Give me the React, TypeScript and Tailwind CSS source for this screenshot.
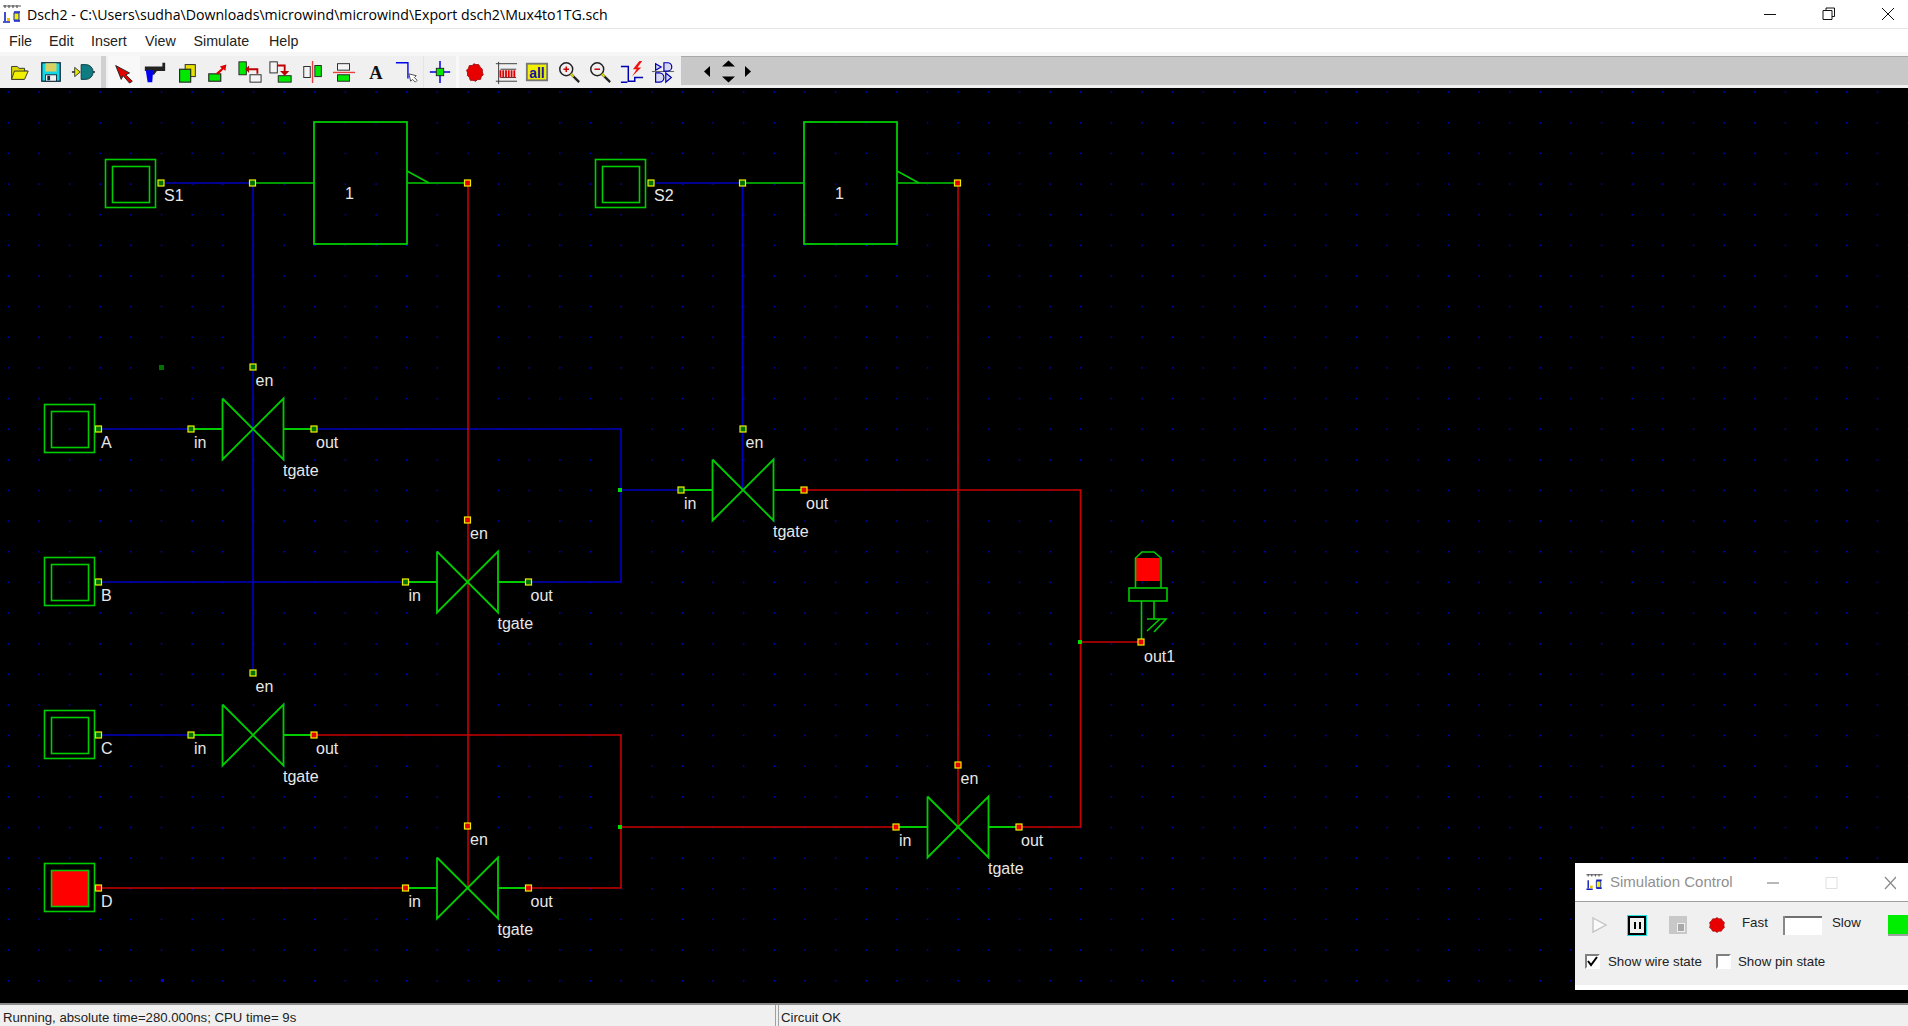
import type { ReactNode } from "react";

const GREEN = "#00cc00";
const BLUE = "#0000c0";
const RED = "#c80000";

const menus = [
  { label: "File", slot: "w-[40px]" },
  { label: "Edit", slot: "w-[42px]" },
  { label: "Insert", slot: "w-[54px]" },
  { label: "View", slot: "w-[48.5px]" },
  { label: "Simulate", slot: "w-[75.5px]" },
  { label: "Help", slot: "w-[40px]" },
];

function Ic({ children }: { children: ReactNode }) {
  return (
    <svg width="24" height="24" viewBox="0 0 26 26" fill="none">
      {children}
    </svg>
  );
}

const icons: Record<string, ReactNode> = {
  open: (
    <Ic>
      <path d="M5 7h6l2 2h6v3h3l-4 9H5z" fill="#d8d800" stroke="#333" strokeWidth="1" />
      <path d="M8 12h15l-4 9H5z" fill="#f0f000" stroke="#333" strokeWidth="1" />
    </Ic>
  ),
  save: (
    <Ic>
      <rect x="3" y="3" width="20" height="20" fill="#10d8e8" stroke="#10283a" strokeWidth="1.4" />
      <rect x="7" y="3.5" width="12" height="9" fill="#d8d060" />
      <rect x="7" y="16" width="12" height="7" fill="#f0f0f0" stroke="#10283a" />
      <rect x="9" y="17" width="3" height="5" fill="#10283a" />
    </Ic>
  ),
  sim: (
    <Ic>
      <path d="M4 8l6 5-6 5z" fill="#e8e800" stroke="#333" />
      <path d="M11 5h5a8 8 0 0 1 0 16h-5z" fill="#0e7c80" stroke="#0a3c40" />
      <path d="M24 13h2M1 13h3" stroke="#222" strokeWidth="1.4" />
    </Ic>
  ),
  arrow: (
    <Ic>
      <path d="M22 23l-7-7 4-2L4 6l6 15 2-4 7 8z" fill="#e00000" stroke="#222" strokeWidth="1" />
    </Ic>
  ),
  gun: (
    <Ic>
      <path d="M2 7h19V3h3v9H15l-3 4H9v-4H2z" fill="#222" />
      <path d="M3 11h8l-1 13H5z" fill="#0000f0" />
    </Ic>
  ),
  copy: (
    <Ic>
      <rect x="11" y="5" width="11" height="13" fill="#e8e000" stroke="#222" />
      <rect x="5" y="10" width="12" height="14" fill="#00e800" stroke="#222" strokeWidth="1.2" />
    </Ic>
  ),
  move: (
    <Ic>
      <rect x="3" y="15" width="13" height="8" fill="#00e800" stroke="#222" strokeWidth="1.2" />
      <path d="M11 14l6-5-2-2 7-2-1 7-2-2-6 6z" fill="#e00000" />
    </Ic>
  ),
  swapA: (
    <Ic>
      <rect x="1" y="2" width="8" height="14" fill="#00e800" stroke="#222" />
      <rect x="13" y="16" width="12" height="8" fill="#f4f4f4" stroke="#222" />
      <path d="M21 15v-5H12" stroke="#c00000" strokeWidth="2" />
      <path d="M12 6l-4 4 4 4z" fill="#c00000" />
    </Ic>
  ),
  swapB: (
    <Ic>
      <rect x="1" y="2" width="8" height="12" fill="#f4f4f4" stroke="#222" />
      <rect x="10" y="17" width="14" height="7" fill="#00e800" stroke="#222" />
      <path d="M9 6h8v7" stroke="#c00000" strokeWidth="2" />
      <path d="M12 12h10l-5 5z" fill="#c00000" />
    </Ic>
  ),
  alignV: (
    <Ic>
      <rect x="3" y="7" width="7" height="12" fill="#f4f4f4" stroke="#222" />
      <rect x="15" y="6" width="7" height="12" fill="#00e800" stroke="#222" />
      <path d="M12.5 1v24" stroke="#e84040" strokeWidth="1.5" />
    </Ic>
  ),
  alignH: (
    <Ic>
      <rect x="6" y="4" width="13" height="7" fill="#f4f4f4" stroke="#222" />
      <rect x="6" y="16" width="13" height="7" fill="#00e800" stroke="#222" />
      <path d="M1 13.5h24" stroke="#e84040" strokeWidth="1.5" />
    </Ic>
  ),
  text: (
    <Ic>
      <text x="13" y="21" textAnchor="middle" fontSize="20" fontWeight="700" fill="#111" fontFamily="Liberation Serif, serif">
        A
      </text>
    </Ic>
  ),
  wire: (
    <Ic>
      <path d="M1 3h13v17" stroke="#0000f0" strokeWidth="1.5" />
      <path d="M15 15l2 8 2-2 3 3 2-2-3-3 2-2z" fill="#fff" stroke="#444" />
    </Ic>
  ),
  pin: (
    <Ic>
      <path d="M13 1v24M2 13h22" stroke="#0000e0" strokeWidth="1.6" />
      <rect x="9" y="9" width="8" height="8" fill="#00e800" stroke="#222" />
    </Ic>
  ),
  blob: (
    <Ic>
      <path d="M13 4l2 1 3-0 2 3 2 2-0 3 1 3-2 2-1 3-3 0-2 2-3-1-3 0-1-3-2-2 0-3-1-3 2-2 1-3 3 0z" fill="#e80000" stroke="#a01010" />
    </Ic>
  ),
  chrono: (
    <Ic>
      <path d="M2 4h23M2 23h23M5 2v24" stroke="#333" strokeWidth="1" />
      <path d="M7 10h17M7 19h17" stroke="#333" />
      <path d="M7 11v8M10 11v8M13 11v8M16 11v8M19 11v8M22 11v8" stroke="#e00000" strokeWidth="2" />
    </Ic>
  ),
  all: (
    <Ic>
      <rect x="2" y="4" width="22" height="18" fill="#f0f000" stroke="#777" strokeWidth="2" />
      <text x="13" y="19" textAnchor="middle" fontSize="15" fontWeight="700" fill="#1010a0" fontFamily="Liberation Sans Narrow, Liberation Sans, sans-serif">
        all
      </text>
    </Ic>
  ),
  zoomIn: (
    <Ic>
      <circle cx="10" cy="10" r="7" fill="#f0f0f0" stroke="#222" strokeWidth="1.6" />
      <path d="M7 10h6M10 7v6" stroke="#d00000" strokeWidth="1.6" />
      <path d="M15 15l9 9" stroke="#222" strokeWidth="2.4" />
      <path d="M15 15l3 3" stroke="#e8e000" strokeWidth="2" />
    </Ic>
  ),
  zoomOut: (
    <Ic>
      <circle cx="10" cy="10" r="7" fill="#f0f0f0" stroke="#222" strokeWidth="1.6" />
      <path d="M7 10h6" stroke="#d00000" strokeWidth="1.6" />
      <path d="M15 15l9 9" stroke="#222" strokeWidth="2.4" />
      <path d="M15 15l3 3" stroke="#e8e000" strokeWidth="2" />
    </Ic>
  ),
  extract: (
    <Ic>
      <path d="M1 7h8v16h7v-4h9M1 24h7" stroke="#0000b0" strokeWidth="1.6" />
      <path d="M21 1l-7 9h4l-5 8 10-10h-4l5-7z" fill="#f01010" />
    </Ic>
  ),
  logic: (
    <Ic>
      <path d="M1 12.5h24" stroke="#555" />
      <path d="M5 4l6 3.5-6 3.5zM14 3h4a4.5 4.5 0 0 1 0 9h-4zM5 14h4a5 5 0 0 1 0 10H5zM16 14l6 5-6 5z" stroke="#0000b0" strokeWidth="1.3" fill="#d8d8f0" />
    </Ic>
  ),
};

const groupA = ["open", "save", "sim"];
const groupB = ["arrow", "gun", "copy", "move", "swapA", "swapB", "alignV", "alignH", "text", "wire"];
const groupD = ["blob", "chrono", "all", "zoomIn", "zoomOut", "extract", "logic"];

function ToolButton({ name, active }: { name: string; active?: boolean }) {
  return (
    <div className={`flex h-full w-[31.5px] shrink-0 items-center justify-center ${active ? "bg-[#f8f8f8]" : ""}`}>
      {icons[name]}
    </div>
  );
}

function Toolbar() {
  return (
    <div className="flex h-[36px] shrink-0 border-t-[4px] border-[#f6f6f6] bg-[#f0f0f0]">
      <div className="flex h-full w-[101px] shrink-0 items-center pl-[3px]">
        {groupA.map((n) => (
          <div key={n} className="flex w-[32px] justify-center">
            {icons[n]}
          </div>
        ))}
      </div>
      <div className="h-full w-[5px] shrink-0 bg-[#d0d0d0]" />
      <div className="w-[2px] shrink-0" />
      {groupB.map((n) => (
        <ToolButton key={n} name={n} active={n === "arrow"} />
      ))}
      <div className="w-[1px] shrink-0 bg-[#e4e4e4]" />
      <ToolButton name="pin" />
      <div className="w-[3px] shrink-0 bg-[#f8f8f8]" />
      {groupD.map((n) => (
        <ToolButton key={n} name={n} />
      ))}
      <div className="ml-[2px] flex h-[29px] flex-1 items-center border-t border-[#a8a8a8] bg-[#c8c8c8] pl-[19px]">
        <svg width="56" height="28" viewBox="0 0 56 28">
          <path d="M4 14.5l6-5.5v11zM51 14.5l-6-5.5v11z" fill="#000" />
          <path d="M22 9.5l6.5-6 6.5 6zM22 19.5l6.5 6 6.5-6z" fill="#000" />
        </svg>
      </div>
    </div>
  );
}

function Node({ x, y, fill }: { x: number; y: number; fill: string }) {
  return <rect x={x - 3} y={y - 3} width="6" height="6" fill={fill} stroke="#f0f000" strokeWidth="1.2" />;
}

function Label({ x, y, children, size = 16 }: { x: number; y: number; children: string; size?: number }) {
  return (
    <text x={x} y={y} fontSize={size} fill="#e8e8e8" fontFamily="Liberation Sans, sans-serif">
      {children}
    </text>
  );
}

const ON = "#e80000";
const OFF = "#007000";

function TGate({
  cx,
  cy,
  en,
  enFill,
  inFill,
  outFill,
}: {
  cx: number;
  cy: number;
  en: number;
  enFill: string;
  inFill: string;
  outFill: string;
}) {
  return (
    <g>
      <path
        d={`M${cx - 61} ${cy}H${cx - 30.5}M${cx - 30.5} ${cy - 30.5}V${cy + 30.5}L${cx + 30.5} ${cy - 30.5}V${cy + 30.5}L${cx - 30.5} ${cy - 30.5}M${cx + 30.5} ${cy}H${cx + 61}`}
        fill="none"
        stroke={GREEN}
        strokeWidth="1.8"
      />
      <Node x={cx - 62} y={cy} fill={inFill} />
      <Node x={cx + 61} y={cy} fill={outFill} />
      <Node x={cx} y={en} fill={enFill} />
      <Label x={cx + 2.5} y={en + 19}>en</Label>
      <Label x={cx - 59} y={cy + 18.5}>in</Label>
      <Label x={cx + 63} y={cy + 18.5}>out</Label>
      <Label x={cx + 30} y={cy + 46.5}>tgate</Label>
    </g>
  );
}

function Switch({ y, name, on }: { y: number; name: string; on?: boolean }) {
  return (
    <g>
      <rect x="44.5" y={y - 24.5} width="50" height="48" fill="none" stroke={GREEN} strokeWidth="1.6" />
      <rect x="51.5" y={y - 17.5} width="37" height="36" fill={on ? "#ff0000" : "none"} stroke={GREEN} strokeWidth="1.6" />
      <Node x={98.5} y={y} fill={on ? ON : OFF} />
      <Label x={101} y={y + 18.5}>{name}</Label>
    </g>
  );
}

function Inverter({ dx, name }: { dx: number; name: string }) {
  return (
    <g transform={`translate(${dx} 0)`}>
      <rect x="105.5" y="159.5" width="50" height="48" fill="none" stroke={GREEN} strokeWidth="1.6" />
      <rect x="112.5" y="166.5" width="37" height="36" fill="none" stroke={GREEN} strokeWidth="1.6" />
      <path d="M253 183H314M407 183H467" stroke={GREEN} strokeWidth="1.6" />
      <rect x="314" y="122" width="93" height="122" fill="none" stroke={GREEN} strokeWidth="1.8" />
      <path d="M407 171l22 12" stroke={GREEN} strokeWidth="1.6" />
      <Label x={164} y={200.5}>{name}</Label>
      <Label x={345} y={198.5}>1</Label>
    </g>
  );
}

function Canvas() {
  const dots: ReactNode[] = [];
  for (let i = 0; i < 63; i++) {
    for (let j = 0; j < 30; j++) {
      dots.push(
        <rect key={`${i}-${j}`} x={7.6 + i * 30.64} y={91.4 + j * 30.64} width="1.5" height="1.5" fill="#0000c8" />
      );
    }
  }
  return (
    <svg className="block h-full w-full" viewBox="0 88 1908 915">
      {dots}
      <rect x="159" y="365" width="5" height="5" fill="#007000" />
      <rect x="161" y="979" width="3" height="3" fill="#0000e0" />

      <g fill="none" strokeWidth="1.6">
        <path d="M161 183H253V673M98 429H191M314 429H621V582H529M98 582H406M98 735H191M651 183H742.5V490M621 490H681" stroke={BLUE} />
        <path d="M468 183V888M958 183V827M804 490H1080.5V827H1019M314 735H621V888H529M98 888H406M621 827H896M1080.5 642H1141" stroke={RED} />
      </g>

      <Inverter dx={0} name="S1" />
      <Inverter dx={490} name="S2" />
      <Node x={161} y={183} fill={OFF} />
      <Node x={252.5} y={183} fill={OFF} />
      <Node x={467.5} y={183} fill={ON} />
      <Node x={651} y={183} fill={OFF} />
      <Node x={742.5} y={183} fill={OFF} />
      <Node x={957.5} y={183} fill={ON} />

      <Switch y={429} name="A" />
      <Switch y={582} name="B" />
      <Switch y={735} name="C" />
      <Switch y={888} name="D" on />

      <TGate cx={253} cy={429} en={367} enFill={OFF} inFill={OFF} outFill={OFF} />
      <TGate cx={467.5} cy={582} en={520} enFill={ON} inFill={OFF} outFill={OFF} />
      <TGate cx={253} cy={735} en={673} enFill={OFF} inFill={OFF} outFill={ON} />
      <TGate cx={467.5} cy={888} en={826} enFill={ON} inFill={ON} outFill={ON} />
      <TGate cx={743} cy={490} en={429} enFill={OFF} inFill={OFF} outFill={ON} />
      <TGate cx={958} cy={827} en={765} enFill={ON} inFill={ON} outFill={ON} />

      <rect x="618" y="488" width="4" height="4" fill="#00e000" />
      <rect x="618" y="825" width="4" height="4" fill="#00e000" />
      <rect x="1078" y="640" width="4" height="4" fill="#00e000" />

      <g fill="none" stroke={GREEN} strokeWidth="1.6">
        <rect x="1136" y="558" width="24" height="23" fill="#ff0000" stroke="none" />
        <path d="M1135.5 588V558L1142 552H1154L1161 558V588" />
        <rect x="1129" y="588" width="38" height="13" />
        <path d="M1141.5 601V642M1154 601V619M1147 619H1166L1154 632M1160 619L1147 631" />
      </g>
      <Node x={1141} y={642} fill={ON} />
      <Label x={1144} y={661.5}>out1</Label>
    </svg>
  );
}

function AppIcon({ small }: { small?: boolean }) {
  return (
    <svg width={small ? 19 : 20} height={small ? 18 : 20} viewBox="0 0 20 20">
      <path d="M1 2h18M3 1v3M7 1v3M11 1v3M15 1v3" stroke="#555" strokeWidth="1.2" />
      <path d="M3 8v9M1 18h7M12 8h6M12 17h6" stroke="#1020c0" strokeWidth="1.6" />
      <rect x="12" y="9" width="5" height="7" fill="#f0f000" stroke="#1020c0" />
      <rect x="5" y="14" width="3" height="3" fill="#f0c000" />
    </svg>
  );
}

function SimulationControl() {
  return (
    <div className="absolute left-[1575px] top-[775px] h-[127px] w-[333px] overflow-hidden border-b-[5px] border-white bg-[#f0f0f0]">
      <div className="flex h-[39px] items-center border-b border-[#a0a0a0] bg-white pl-[10px]">
        <AppIcon small />
        <span className="ml-[6px] mt-[1px] text-[15px] text-[#909090]">Simulation Control</span>
        <svg className="absolute left-[191px] top-[12px]" width="130" height="16" viewBox="0 0 130 16" fill="none">
          <path d="M1 8h12" stroke="#888" strokeWidth="1.2" />
          <rect x="60" y="2.5" width="11" height="11" stroke="#e0e0e0" />
          <path d="M119 2l11 12M130 2l-11 12" stroke="#888" strokeWidth="1.2" />
        </svg>
      </div>
      <div className="flex h-[46px] items-center whitespace-nowrap pl-[16px] text-[13.3px] text-[#222]">
        <svg className="shrink-0" width="18" height="20" viewBox="0 0 18 20" fill="#fafafa" stroke="#c4c4c4" strokeWidth="1.4">
          <path d="M2 3l13 7-13 7z" />
        </svg>
        <div className="ml-[19px] flex h-[19px] w-[18px] shrink-0 items-center justify-center border-2 border-black outline outline-[#20e0e0]">
          <div className="h-[7px] w-[7px] border-x-[2.5px] border-black" />
        </div>
        <div className="relative ml-[23px] h-[18px] w-[18px] shrink-0 bg-[#c8c8c8]">
          <div className="absolute bottom-[2px] right-[2px] h-[9px] w-[8px] border border-[#f0f0f0] bg-[#a8a8a8]" />
        </div>
        <svg className="ml-[22px] shrink-0" width="16" height="16" viewBox="0 0 26 26">
          <path d="M13 1l3 2 4 0 2 3 3 3-1 4 1 4-3 3-2 3-4 0-3 2-3-2-4 0-2-3-3-3 1-4-1-4 3-3 2-3 4 0z" fill="#e80000" stroke="#a01010" strokeWidth="1.2" />
        </svg>
        <span className="mb-[4px] ml-[17px] w-[27px] shrink-0">Fast</span>
        <div className="relative ml-[7px] h-[19px] w-[46px] shrink-0 border-t-2 border-[#707070] bg-white">
          <div className="absolute left-0 top-[-2px] h-[19px] w-[9px] border-r-2 border-[#888] bg-[#f0f0f0]" />
        </div>
        <span className="mb-[4px] ml-[10px] w-[30px] shrink-0">Slow</span>
        <div className="ml-[26px] h-[21px] w-[30px] shrink-0 border-b-2 border-[#a0a0a0] bg-[#00ee00]" />
      </div>
      <div className="flex items-center whitespace-nowrap pl-[10px] pt-[4px] text-[13.3px] text-[#222]">
        <div className="flex h-[15px] w-[15px] shrink-0 items-center justify-center border-2 border-t-[#808080] border-l-[#808080] border-r-white border-b-white bg-white">
          <svg width="11" height="11" viewBox="0 0 11 11" fill="none">
            <path d="M1 5l3 4 6-8" stroke="#000" strokeWidth="2" />
          </svg>
        </div>
        <span className="ml-[8px] w-[95px] shrink-0">Show wire state</span>
        <div className="ml-[13px] h-[15px] w-[15px] shrink-0 border-2 border-t-[#808080] border-l-[#808080] border-r-white border-b-white bg-white" />
        <span className="ml-[7px]">Show pin state</span>
      </div>
    </div>
  );
}

export default function App() {
  return (
    <div className="flex h-[1026px] w-[1908px] flex-col overflow-hidden bg-white font-['Liberation_Sans',sans-serif]">
      <div className="relative flex h-[29px] shrink-0 items-center border-b border-[#e6e6e6] pl-[2px]">
        <AppIcon />
        <span className="ml-[5px] mt-[1px] font-['Open_Sans',sans-serif] text-[14.15px] text-black">
          {"Dsch2 - C:\\Users\\sudha\\Downloads\\microwind\\microwind\\Export dsch2\\Mux4to1TG.sch"}
        </span>
        <svg className="absolute right-[11px] top-[7px]" width="134" height="14" viewBox="0 0 134 14" fill="none" stroke="#111" strokeWidth="1">
          <path d="M1 7.5h12" />
          <path d="M60 3.5h9v9h-9zM63 3V1h8.5v8.5H69" />
          <path d="M122 1l12 12M134 1l-12 12" transform="translate(-3 0)" />
        </svg>
      </div>
      <div className="flex h-[23px] shrink-0 items-center bg-white pl-[9px] pt-[2px] text-[14.3px] text-[#222]">
        {menus.map((m) => (
          <span key={m.label} className={`shrink-0 ${m.slot}`}>
            {m.label}
          </span>
        ))}
      </div>
      <Toolbar />
      <div className="relative min-h-0 flex-1 bg-black">
        <Canvas />
        <SimulationControl />
      </div>
      <div className="flex h-[23px] shrink-0 border-t-2 border-[#8c8c8c] bg-[#f0f0f0] text-[13.2px] leading-[16px] text-[#222]">
        <div className="w-[776px] shrink-0 overflow-hidden whitespace-nowrap border-r border-[#a0a0a0] pl-[3px] pt-[5px]">
          Running, absolute time=280.000ns; CPU time= 9s
        </div>
        <div className="ml-[2px] flex-1 overflow-hidden border-l border-[#a0a0a0] pl-[2px] pt-[5px]">Circuit OK</div>
      </div>
    </div>
  );
}
